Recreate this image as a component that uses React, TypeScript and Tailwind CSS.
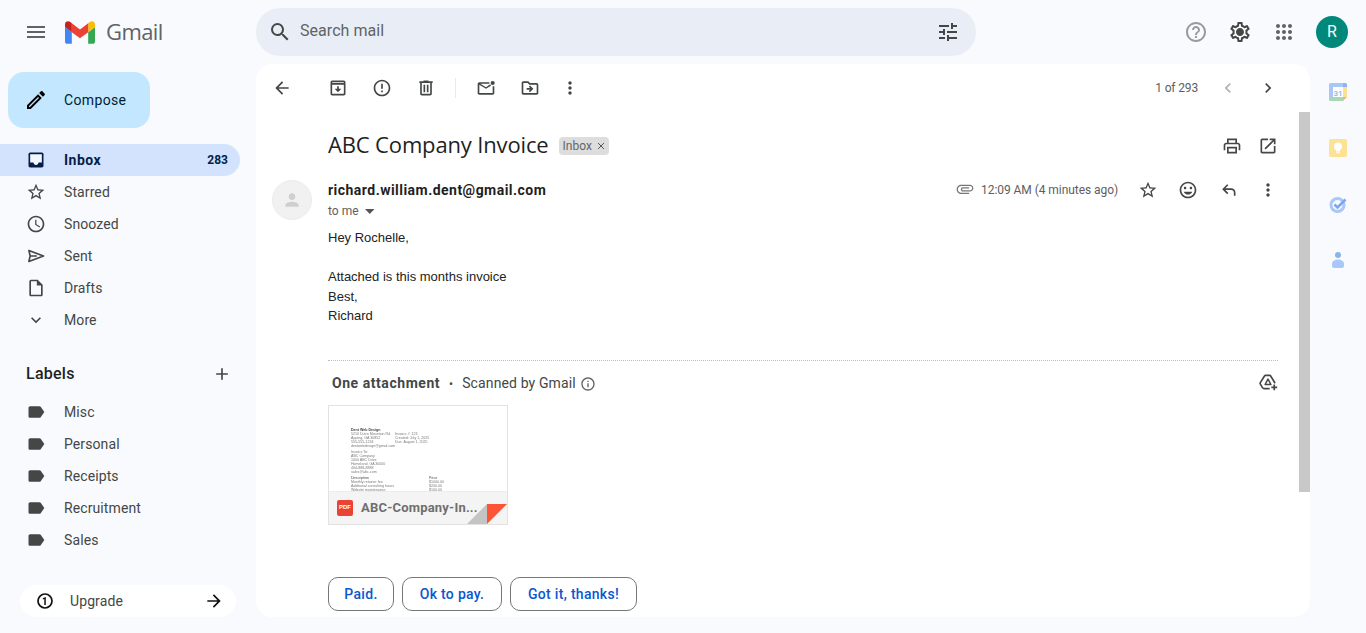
import React from "react";

type IP = { d: string; size?: number; cls?: string; extra?: React.ReactNode; box?: string };
function I({ d, size = 20, cls = "", extra, box = "0 0 24 24" }: IP) {
  return (
    <svg width={size} height={size} viewBox={box} fill="currentColor" className={"shrink-0 " + cls}>
      <path d={d} />
      {extra}
    </svg>
  );
}

const P = {
  menu: "M3 18h18v-2H3v2zm0-5h18v-2H3v2zm0-7v2h18V6H3z",
  search: "M15.5 14h-.79l-.28-.27A6.471 6.471 0 0 0 16 9.5 6.5 6.5 0 1 0 9.5 16c1.61 0 3.09-.59 4.23-1.57l.27.28v.79l5 4.99L20.49 19l-4.99-5zm-6 0C7.01 14 5 11.99 5 9.5S7.01 5 9.5 5 14 7.01 14 9.5 11.99 14 9.5 14z",
  tune: "M3 17v2h6v-2H3zM3 5v2h10V5H3zm10 16v-2h8v-2h-8v-2h-2v6h2zM7 9v2H3v2h4v2h2V9H7zm14 4v-2H11v2h10zm-6-4h2V7h4V5h-4V3h-2v6z",
  help: "M11 18h2v-2h-2v2zm1-16C6.48 2 2 6.48 2 12s4.48 10 10 10 10-4.48 10-10S17.52 2 12 2zm0 18c-4.41 0-8-3.59-8-8s3.59-8 8-8 8 3.59 8 8-3.59 8-8 8zm0-14c-2.21 0-4 1.79-4 4h2c0-1.1.9-2 2-2s2 .9 2 2c0 2-3 1.75-3 5h2c0-2.25 3-2.5 3-5 0-2.21-1.79-4-4-4z",
  gear: "M19.43 12.98c.04-.32.07-.64.07-.98 0-.34-.03-.66-.07-.98l2.11-1.65c.19-.15.24-.42.12-.64l-2-3.46c-.09-.16-.26-.25-.44-.25-.06 0-.12.01-.17.03l-2.49 1c-.52-.4-1.08-.73-1.69-.98l-.38-2.65C14.46 2.18 14.25 2 14 2h-4c-.25 0-.46.18-.49.42l-.38 2.65c-.61.25-1.17.59-1.69.98l-2.49-1c-.06-.02-.12-.03-.18-.03-.17 0-.34.09-.43.25l-2 3.46c-.13.22-.07.49.12.64l2.11 1.65c-.04.32-.07.65-.07.98 0 .33.03.66.07.98l-2.11 1.65c-.19.15-.24.42-.12.64l2 3.46c.09.16.26.25.44.25.06 0 .12-.01.17-.03l2.49-1c.52.4 1.08.73 1.69.98l.38 2.65c.03.24.24.42.49.42h4c.25 0 .46-.18.49-.42l.38-2.65c.61-.25 1.17-.59 1.69-.98l2.49 1c.06.02.12.03.18.03.17 0 .34-.09.43-.25l2-3.46c.12-.22.07-.49-.12-.64l-2.11-1.65zm-1.98-1.71c.04.31.05.52.05.73 0 .21-.02.43-.05.73l-.14 1.13.89.7 1.08.84-.7 1.21-1.27-.51-1.04-.42-.9.68c-.43.32-.84.56-1.25.73l-1.06.43-.16 1.13-.2 1.35h-1.4l-.19-1.35-.16-1.13-1.06-.43c-.43-.18-.83-.41-1.23-.71l-.91-.7-1.06.43-1.27.51-.7-1.21 1.08-.84.89-.7-.14-1.13c-.03-.31-.05-.54-.05-.74s.02-.43.05-.73l.14-1.13-.89-.7-1.08-.84.7-1.21 1.27.51 1.04.42.9-.68c.43-.32.84-.56 1.25-.73l1.06-.43.16-1.13.2-1.35h1.39l.19 1.35.16 1.13 1.06.43c.43.18.83.41 1.23.71l.91.7 1.06-.43 1.27-.51.7 1.21-1.07.85-.89.7.14 1.13zM12 8c-2.21 0-4 1.79-4 4s1.79 4 4 4 4-1.79 4-4-1.79-4-4-4z",
  star: "M22 9.24l-7.19-.62L12 2 9.19 8.63 2 9.24l5.46 4.73L5.82 21 12 17.27 18.18 21l-1.63-7.03L22 9.24zM12 15.4l-3.76 2.27 1-4.28-3.32-2.88 4.38-.38L12 6.1l1.71 4.04 4.38.38-3.32 2.88 1 4.28L12 15.4z",
  clock: "M11.99 2C6.47 2 2 6.48 2 12s4.47 10 9.99 10C17.52 22 22 17.52 22 12S17.52 2 11.99 2zM12 20c-4.42 0-8-3.58-8-8s3.58-8 8-8 8 3.58 8 8-3.58 8-8 8zm.5-13H11v6l5.25 3.15.75-1.23-4.5-2.67z",
  file: "M14 2H6c-1.1 0-1.99.9-1.99 2L4 20c0 1.1.89 2 1.99 2H18c1.1 0 2-.9 2-2V8l-6-6zM6 20V4h7v5h5v11H6z",
  expand: "M16.59 8.59L12 13.17 7.41 8.59 6 10l6 6 6-6z",
  add: "M19 13h-6v6h-2v-6H5v-2h6V5h2v6h6v2z",
  label: "M17.63 5.84C17.27 5.33 16.67 5 16 5L5 5.01C3.9 5.01 3 5.9 3 7v10c0 1.1.9 1.99 2 1.99L16 19c.67 0 1.27-.33 1.63-.84L22 12l-4.37-6.16z",
  pen: "M3 17.25V21h3.75L17.81 9.94l-3.75-3.75L3 17.25zM5.92 19H5v-.92l9.06-9.06.92.92L5.92 19zM20.71 5.63l-2.34-2.34c-.2-.2-.45-.29-.71-.29s-.51.1-.7.29l-1.83 1.83 3.75 3.75 1.83-1.83c.39-.39.39-1.02 0-1.41z",
  back: "M20 11H7.83l5.59-5.59L12 4l-8 8 8 8 1.41-1.41L7.83 13H20v-2z",
  forward: "M12 4l-1.41 1.41L16.17 11H4v2h12.17l-5.58 5.59L12 20l8-8z",
  archive: "M19 3H5c-1.1 0-2 .9-2 2v14c0 1.1.9 2 2 2h14c1.1 0 2-.9 2-2V5c0-1.1-.9-2-2-2zm0 16H5V8h14v11zM5 6V5h14v1H5zm7 11l4-4h-3v-3h-2v3H8z",
  report: "M12 2C6.48 2 2 6.48 2 12s4.48 10 10 10 10-4.48 10-10S17.52 2 12 2zm0 18c-4.41 0-8-3.59-8-8s3.59-8 8-8 8 3.59 8 8-3.59 8-8 8zM11 7h2v6h-2zm0 8h2v2h-2z",
  trash: "M15 4V3H9v1H4v2h1v13c0 1.1.9 2 2 2h10c1.1 0 2-.9 2-2V6h1V4h-5zm2 15H7V6h10v13zM9 8h2v9H9zm4 0h2v9h-2z",
  unread: "M4 5c-1.1 0-2 .9-2 2v11c0 1.1.9 2 2 2h16c1.1 0 2-.9 2-2v-8h-2v8H4V8l8 5 6-3.75-1-1.7L12 11 5.2 7H16V5H4z",
  move: "M20 6h-8l-2-2H4c-1.1 0-2 .9-2 2v12c0 1.1.9 2 2 2h16c1.1 0 2-.9 2-2V8c0-1.1-.9-2-2-2zm0 12H4V6h5.17l2 2H20v10zM12.16 12H8v2h4.16l-1.6 1.59L11.97 17 16 13l-4.03-4-1.41 1.41z",
  more: "M12 8c1.1 0 2-.9 2-2s-.9-2-2-2-2 .9-2 2 .9 2 2 2zm0 2c-1.1 0-2 .9-2 2s.9 2 2 2 2-.9 2-2-.9-2-2-2zm0 6c-1.1 0-2 .9-2 2s.9 2 2 2 2-.9 2-2-.9-2-2-2z",
  left: "M15.41 7.41L14 6l-6 6 6 6 1.41-1.41L10.83 12z",
  right: "M10 6L8.59 7.41 13.17 12l-4.58 4.59L10 18l6-6z",
  print: "M19 8h-1V3H6v5H5c-1.66 0-3 1.34-3 3v6h4v4h12v-4h4v-6c0-1.66-1.34-3-3-3zM8 5h8v3H8V5zm8 14H8v-4h8v4zm2-2v-4H6v4H4v-6c0-.55.45-1 1-1h14c.55 0 1 .45 1 1v6h-2z",
  open: "M19 19H5V5h7V3H5c-1.11 0-2 .9-2 2v14c0 1.1.89 2 2 2h14c1.1 0 2-.9 2-2v-7h-2v7zM14 3v2h3.59l-9.83 9.83 1.41 1.41L19 6.41V10h2V3h-7z",
  smile: "M11.99 2C6.47 2 2 6.48 2 12s4.47 10 9.99 10C17.52 22 22 17.52 22 12S17.52 2 11.99 2zM12 20c-4.42 0-8-3.58-8-8s3.58-8 8-8 8 3.58 8 8-3.58 8-8 8zm3.5-9c.83 0 1.5-.67 1.5-1.5S16.33 8 15.5 8 14 8.67 14 9.5s.67 1.5 1.5 1.5zm-7 0c.83 0 1.5-.67 1.5-1.5S9.33 8 8.5 8 7 8.67 7 9.5 7.67 11 8.5 11zm3.5 6.5c2.33 0 4.31-1.46 5.11-3.5H6.89c.8 2.04 2.78 3.5 5.11 3.5z",
  reply: "M21 19h-2v-4c0-1.65-1.35-3-3-3H8.83l3.58 3.59L11 17l-6-6 6-6 1.41 1.41L8.83 10H16c2.76 0 5 2.24 5 5v4z",
  clip: "M2 12.5C2 9.46 4.46 7 7.5 7H18c2.21 0 4 1.79 4 4s-1.79 4-4 4H9.5C8.12 15 7 13.88 7 12.5S8.12 10 9.5 10H17v1.5H9.5c-.55 0-1 .45-1 1s.45 1 1 1H18c1.38 0 2.5-1.12 2.5-2.5S19.38 8.500 18 8.500H7.500C5.290 8.500 3.500 10.290 3.500 12.500S5.290 16.500 7.500 16.500H17V18H7.500C4.460 18 2 15.540 2 12.500z",
  info: "M11 7h2v2h-2zm0 4h2v6h-2zm1-9C6.48 2 2 6.48 2 12s4.48 10 10 10 10-4.48 10-10S17.52 2 12 2zm0 18c-4.41 0-8-3.59-8-8s3.59-8 8-8 8 3.59 8 8-3.59 8-8 8z",
  person: "M12 12c2.210 0 4-1.790 4-4s-1.790-4-4-4-4 1.790-4 4 1.790 4 4 4zm0 2c-2.670 0-8 1.340-8 4v2h16v-2c0-2.660-5.330-4-8-4z",
  apps: "M6 8c1.100 0 2-.9 2-2s-.9-2-2-2-2 .9-2 2 .9 2 2 2zm6 12c1.100 0 2-.9 2-2s-.9-2-2-2-2 .9-2 2 .9 2 2 2zm-6 0c1.100 0 2-.9 2-2s-.9-2-2-2-2 .9-2 2 .9 2 2 2zm0-6c1.100 0 2-.9 2-2s-.9-2-2-2-2 .9-2 2 .9 2 2 2zm6 0c1.100 0 2-.9 2-2s-.9-2-2-2-2 .9-2 2 .9 2 2 2zm6-10c-1.100 0-2 .9-2 2s.9 2 2 2 2-.9 2-2-.9-2-2-2zm-6 4c1.100 0 2-.9 2-2s-.9-2-2-2-2 .9-2 2 .9 2 2 2zm6 6c1.100 0 2-.9 2-2s-.9-2-2-2-2 .9-2 2 .9 2 2 2zm0 6c1.100 0 2-.9 2-2s-.9-2-2-2-2 .9-2 2 .9 2 2 2z",
};

function GmailM() {
  return (
    <svg width="30" height="23" viewBox="52 42 88 66" className="shrink-0">
      <path fill="#4285f4" d="M58 108h14V74L52 59v43c0 3.320 2.690 6 6 6" />
      <path fill="#34a853" d="M120 108h14c3.320 0 6-2.690 6-6V59l-20 15" />
      <path fill="#fbbc04" d="M120 48v26l20-15v-8c0-7.420-8.470-11.650-14.400-7.200" />
      <path fill="#ea4335" d="M72 74V48l24 18 24-18v26L96 92" />
      <path fill="#c5221f" d="M52 51v8l20 15V48l-5.600-4.200c-5.940-4.450-14.400-.22-14.400 7.200" />
    </svg>
  );
}

function SentIcon() {
  return (
    <svg width="20" height="20" viewBox="0 0 24 24" fill="none" stroke="currentColor" strokeWidth="2" strokeLinejoin="round" className="shrink-0">
      <path d="M3.500 5.500L21 12 3.500 18.500 5 12zM5 12h8" />
    </svg>
  );
}

function DriveIcon() {
  return (
    <svg width="20" height="20" viewBox="0 0 24 24" fill="none" stroke="currentColor" strokeWidth="2" strokeLinejoin="round" className="shrink-0 -mt-[3px] text-[#444746]">
      <path d="M14 20H7l-1.500-1L2.500 14l.1-1L8 4.500 9 4h5l1 .5 5.500 9" />
      <path d="M12 8.500L15.500 15h-7z" strokeWidth="1.800" />
      <path d="M19.500 15v7M16 18.500h7" />
    </svg>
  );
}

const nav: [React.ReactNode, string][] = [
  [<I d={P.star} />, "Starred"],
  [<I d={P.clock} />, "Snoozed"],
  [<SentIcon />, "Sent"],
  [<I d={P.file} />, "Drafts"],
  [<I d={P.expand} />, "More"],
];
const labels = ["Misc", "Personal", "Receipts", "Recruitment", "Sales"];

function Sidebar() {
  return (
    <aside className="w-[256px] shrink-0 h-full flex flex-col text-[#444746] text-[14px] tracking-[0.1px]">
      <div className="pl-2 pt-2">
        <div className="w-[142px] h-[56px] rounded-2xl bg-[#c2e7ff] flex items-center pl-[16px] text-[#001d35] font-[450] tracking-[0.35px]">
          <I d={P.pen} size={24} cls="text-black" />
          <span className="ml-4">Compose</span>
        </div>
      </div>
      <div className="mt-4 w-[240px] h-8 rounded-r-full bg-[#d3e3fd] flex items-center pl-[26px] pr-3 font-bold text-[#041e49] tracking-[0.5px]">
        <svg width="20" height="20" viewBox="0 0 24 24" className="shrink-0">
          <rect x="3" y="3" width="18" height="18" rx="2" fill="#041e49" />
          <path d="M5 5h14v10h-4c0 1.660-1.340 3-3 3s-3-1.340-3-3H5z" fill="#f3f7fe" />
        </svg>
        <span className="ml-[18px] flex-1">Inbox</span>
        <span className="text-[12px] tracking-normal">283</span>
      </div>
      {nav.map(([icon, t]) => (
        <div key={t} className="h-8 flex items-center pl-[26px]">
          {icon}
          <span className="ml-[18px]">{t}</span>
        </div>
      ))}
      <div className="mt-[28px] h-[20px] flex items-center justify-between pl-[26px] pr-[24px]">
        <span className="text-[16px] font-medium text-[#1f1f1f] tracking-[0.25px]">Labels</span>
        <I d={P.add} />
      </div>
      <div className="mt-[12px]">
        {labels.map((t) => (
          <div key={t} className="h-8 flex items-center pl-[26px]">
            <I d={P.label} cls="text-[#444746]" />
            <span className="ml-[18px]">{t}</span>
          </div>
        ))}
      </div>
      <div className="mt-[29px] ml-5 w-[216px] h-8 rounded-full bg-white flex items-center pl-[16px] pr-[12px] text-[#444746]">
        <svg width="18" height="18" viewBox="0 0 18 18" className="shrink-0">
          <circle cx="9" cy="9" r="7" fill="none" stroke="#111" strokeWidth="1.700" />
          <path d="M9.800 5v8H8.300V6.900L6.800 7.500V6.300L9.600 5z" fill="#111" />
        </svg>
        <span className="ml-[16px] flex-1">Upgrade</span>
        <I d={P.forward} size={20} cls="text-[#111]" />
      </div>
    </aside>
  );
}

function Tool({ d, w = 44, cls = "text-[#444746]", size = 20, extra }: { d: string; w?: number; cls?: string; size?: number; extra?: React.ReactNode }) {
  return (
    <div style={{ width: w }} className={"flex justify-center shrink-0 " + cls}>
      <I d={d} size={size} extra={extra} />
    </div>
  );
}

function Attachment() {
  return (
    <div className="relative mt-[11px] w-[180px] h-[120px] border border-[#e2e2e2] bg-white overflow-hidden">
      <div className="pl-[22px] pt-[22px] text-[3.600px] leading-[4.100px] text-[#7a7a7a] blur-[0.25px] font-['Liberation_Sans',sans-serif]">
        <div className="flex">
          <div className="w-[44px] whitespace-nowrap">
            <div className="font-bold text-[#444]">Dent Web Design</div>
            <div>5210 Dutro Mountain Rd</div>
            <div>Apping, GA 30852</div>
            <div>555-555-1234</div>
            <div>dentwebdesign@gmail.com</div>
          </div>
          <div className="pt-[4px] whitespace-nowrap">
            <div>Invoice #: 123</div>
            <div>Created: July 1, 2025</div>
            <div>Due: August 1, 2025</div>
          </div>
        </div>
        <div className="mt-[2px]">
          <div>Invoice To:</div>
          <div>ABC Company</div>
          <div>1000 ABC Drive</div>
          <div>Homeland, GA 30000</div>
          <div>404-888-8888</div>
          <div>sales@abc.com</div>
        </div>
        <div className="mt-[1px] w-[93px]">
          {[
            ["Description", "Price"],
            ["Monthly retainer fee", "$1000.00"],
            ["Additional consulting hours", "$200.00"],
            ["Website maintenance", "$100.00"],
          ].map(([a, b], i) => (
            <div key={a} className={"flex justify-between whitespace-nowrap " + (i === 0 ? "text-[#444]" : "")}>
              <span>{a}</span>
              <span className="w-[15px]">{b}</span>
            </div>
          ))}
        </div>
      </div>
      <div className="absolute left-0 right-0 bottom-0 h-[33px] bg-[#f4f4f4] border-t border-[#ededed] flex items-center pl-2">
        <div className="w-4 h-4 rounded-[2px] bg-[#ea4335] text-white text-[6px] font-black flex items-center justify-center font-['Liberation_Sans',sans-serif]">PDF</div>
        <span className="ml-2 text-[13px] font-bold text-[#6f6f6f] tracking-[0.2px]">ABC-Company-In...</span>
      </div>
      <svg width="40" height="20" viewBox="0 0 40 20" className="absolute right-0 bottom-0">
        <path d="M0 20L20 0v20z" fill="#c4c4c4" />
        <path d="M20 0h20L20 20z" fill="#fc5434" />
      </svg>
    </div>
  );
}

function Reply({ t, w }: { t: string; w: string }) {
  return (
    <div className={"h-[34px] pt-[1px] rounded-[10px] border border-[#747775] flex items-center justify-center text-[14px] font-medium tracking-[0.3px] text-[#0b57d0] " + w}>{t}</div>
  );
}

function Main() {
  return (
    <main className="flex-1 min-w-0 h-[553px] bg-white rounded-2xl flex overflow-hidden text-[#444746]">
      <div className="flex-1 min-w-0 flex flex-col">
        <div className="h-[48px] shrink-0 flex items-center pl-[4px] pr-[11px]">
          <Tool d={P.back} />
          <div className="w-[12px]" />
          <Tool d={P.archive} />
          <Tool d={P.report} />
          <Tool d={P.trash} />
          <div className="w-px h-5 bg-[#e9e9e9] ml-[7px] mr-[8px]" />
          <Tool d={P.unread} extra={<circle cx="20" cy="6" r="2.500" />} w={44} />
          <Tool d={P.move} w={44} />
          <Tool d={P.more} w={36} />
          <div className="flex-1" />
          <span className="text-[12px] mr-[10px] text-[#5e5e5e] tracking-[-0.15px]">1 of 293</span>
          <Tool d={P.left} w={40} cls="text-[#b0b1b1]" size={20} />
          <Tool d={P.right} w={40} size={20} />
        </div>
        <div className="pl-[16px] pr-[21px]">
          <div className="flex items-center pl-[56px] mt-[19px] h-[28px]">
            <span className="text-[22px] -mt-[2px] text-[#1f1f1f] font-['Open_Sans',sans-serif] tracking-[-0.15px]">ABC Company Invoice</span>
            <span className="ml-[10px] h-[18px] w-[50px] mt-[1px] bg-[#dddddd] rounded-[4px] flex items-center pl-1 text-[12px] text-[#666]">
              Inbox
              <svg width="8" height="8" viewBox="0 0 8 8" className="ml-[5px]"><path d="M1 1l6 6M7 1L1 7" stroke="#555" strokeWidth="1" /></svg>
            </span>
            <div className="flex-1" />
            <div className="flex mt-[2px]">
              <Tool d={P.print} w={36} />
              <Tool d={P.open} w={36} cls="text-[#444746] -mr-[8px]" />
            </div>
          </div>
          <div className="flex mt-[21px]">
            <div className="w-10 h-10 rounded-full bg-[#f1f1f1] border border-[#ececec] flex items-center justify-center text-[#cfcfcf]">
              <I d={P.person} size={20} />
            </div>
            <div className="ml-4 flex-1 min-w-0">
              <div className="flex items-center justify-between h-5">
                <span className="text-[14px] font-bold text-[#1f1f1f] tracking-[0.47px]">richard.william.dent@gmail.com</span>
                <div className="flex items-center">
                  <I d={P.clip} size={20} cls="text-[#777] -mt-[3px]" />
                  <span className="ml-[6px] text-[12px] text-[#5e5e5e] w-[137px] whitespace-nowrap tracking-[-0.05px]">12:09 AM (4 minutes ago)</span>
                  <div className="w-[10px]" />
                  <Tool d={P.star} w={40} />
                  <Tool d={P.smile} w={40} />
                  <Tool d={P.reply} w={40} />
                  <Tool d={P.more} w={40} cls="text-[#444746] -mr-[10px]" />
                </div>
              </div>
              <div className="mt-[2px] h-[18px] flex items-center text-[12px] text-[#5e5e5e]">
                to me
                <svg width="10" height="5" viewBox="0 0 10 5" className="ml-[6px]"><path d="M0 0h9.500L4.750 5z" fill="#555" /></svg>
              </div>
              <div className="mt-[8px] text-[13px] leading-[19.500px] text-[#222] font-['Liberation_Sans',sans-serif]">
                <div>Hey Rochelle,</div>
                <div className="h-[19.500px]" />
                <div>Attached is this months invoice</div>
                <div>Best,</div>
                <div>Richard</div>
              </div>
              <div className="mt-[34px] border-t border-dotted border-[#bdbdbd]" />
              <div className="mt-[13px] h-5 flex items-center pl-1 text-[14px] text-[#444746]">
                <span className="font-bold tracking-[0.55px]">One attachment</span>
                <span className="mx-[9px] text-[#444] text-[12px]">•</span>
                <span className="tracking-[0.12px]">Scanned by Gmail</span>
                <I d={P.info} size={16} cls="ml-[4px] text-[#5f6368]" />
                <div className="flex-1" />
                <DriveIcon />
              </div>
              <Attachment />
              <div className="mt-[52px] flex gap-2">
                <Reply t="Paid." w="w-[66px]" />
                <Reply t="Ok to pay." w="w-[100px]" />
                <Reply t="Got it, thanks!" w="w-[127px]" />
              </div>
            </div>
          </div>
        </div>
      </div>
      <div className="w-[11px] shrink-0 pt-[48px]">
        <div className="h-[380px] bg-[#c8c8c8]" />
      </div>
    </main>
  );
}

function Rail() {
  return (
    <div className="w-[56px] shrink-0 flex flex-col items-center pt-[18px] gap-[36px]">
      <svg width="20" height="20" viewBox="0 0 20 20">
        <rect x="1" y="1" width="18" height="18" rx="1.500" fill="#fff" />
        <path d="M1 5V2.500A1.500 1.500 0 0 1 2.500 1H15v4z" fill="#a9c6f8" />
        <path d="M1 5h4v10H1z" fill="#a9c6f8" />
        <path d="M15 1h2.500A1.500 1.500 0 0 1 19 2.500V5h-4z" fill="#8fb3f0" />
        <path d="M15 5h4v10h-4z" fill="#fbe196" />
        <path d="M1 15h14v4H2.500A1.500 1.500 0 0 1 1 17.500z" fill="#a6d8b4" />
        <path d="M15 15h4l-4 4z" fill="#f5a9a0" />
        <text x="10" y="13.500" textAnchor="middle" fontSize="8" fontWeight="700" fill="#9dbbf0" fontFamily="Roboto, sans-serif">31</text>
      </svg>
      <svg width="20" height="20" viewBox="0 0 20 20">
        <rect x="1" y="1" width="18" height="18" rx="2" fill="#fde293" />
        <circle cx="10" cy="8.500" r="4" fill="#fff" />
        <rect x="8" y="11.500" width="4" height="2" fill="#fff" />
        <rect x="8" y="14.300" width="4" height="1" fill="#fff" />
      </svg>
      <svg width="20" height="20" viewBox="0 0 20 20" fill="none">
        <circle cx="9.500" cy="11" r="6.500" stroke="#a8c7fa" strokeWidth="3" />
        <path d="M6.500 10.500l3 3 8-8" stroke="#7aa7f5" strokeWidth="2.500" />
      </svg>
      <svg width="20" height="20" viewBox="0 0 20 20">
        <circle cx="10" cy="5" r="3" fill="#8ab4f0" />
        <path d="M4 14c0-3 3-4.500 6-4.500s6 1.500 6 4.500v2a2 2 0 0 1-2 2H6a2 2 0 0 1-2-2z" fill="#a8c7fa" />
      </svg>
    </div>
  );
}

function Header() {
  return (
    <header className="h-[64px] shrink-0 flex items-center text-[#444746]">
      <div className="w-[256px] shrink-0 flex items-center pl-[24px]">
        <I d={P.menu} size={24} cls="text-[#5f6368]" />
        <div className="ml-[17px]"><GmailM /></div>
        <span className="ml-[11px] -mt-[2px] text-[22px] text-[#5f6368] font-['Open_Sans',sans-serif] tracking-[-0.6px]">Gmail</span>
      </div>
      <div className="w-[720px] h-[48px] rounded-full bg-[#e9eef6] flex items-center pl-[12px] pr-[16px]">
        <I d={P.search} size={24} />
        <span className="ml-[8px] flex-1 -mt-[2px] text-[16px] text-[#5f6368] tracking-[0.05px]">Search mail</span>
        <I d={P.tune} size={24} />
      </div>
      <div className="flex-1" />
      <div className="flex items-center pr-[18px]">
        <Tool d={P.help} w={44} size={24} cls="text-[#9a9a9a]" />
        <Tool d={P.gear} w={44} size={24} cls="text-[#444746]" />
        <Tool d={P.apps} w={44} size={24} cls="text-[#5f6368]" />
        <div className="ml-[10px] w-8 h-8 rounded-full bg-[#00897b] text-white text-[16px] flex items-center justify-center">R</div>
      </div>
    </header>
  );
}

export default function App() {
  return (
    <div className="w-[1366px] h-[633px] overflow-hidden bg-[#f8fafd] flex flex-col font-['Roboto',sans-serif]">
      <Header />
      <div className="flex flex-1 min-h-0">
        <Sidebar />
        <Main />
        <Rail />
      </div>
    </div>
  );
}
